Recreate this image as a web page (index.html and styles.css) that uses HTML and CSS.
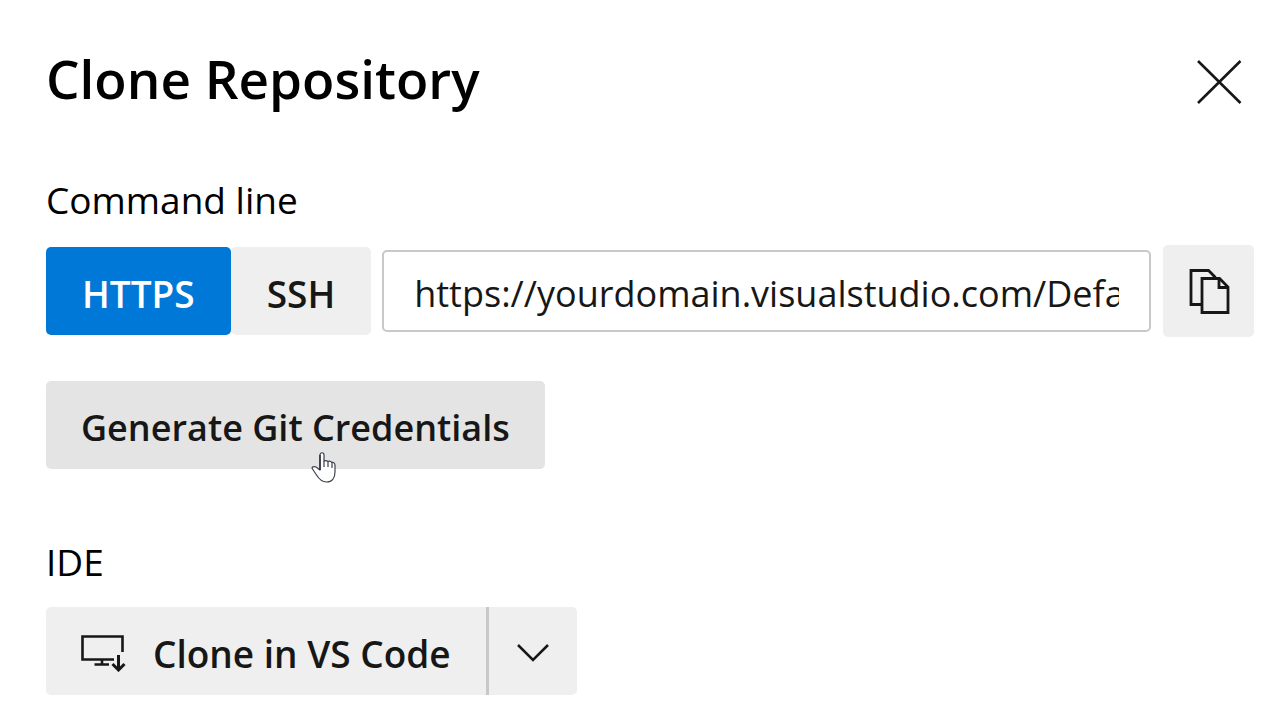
FILE: index.html
```
<!DOCTYPE html>
<html lang="en">
<head>
    <meta charset="UTF-8">
    <meta name="viewport" content="width=device-width, initial-scale=1.0">
    <title>Clone Repository</title>
    <link rel="stylesheet" href="styles.css">
</head>
<body>
    <main class="panel">
        <header class="panel-header">
            <h1>Clone Repository</h1>
            <button class="close-btn" type="button" aria-label="Close">
                <svg width="46" height="46" viewBox="0 0 46 46" fill="none" stroke="currentColor" stroke-width="2.6">
                    <path d="M2 2L44.500 44M44.500 2L2 44"/>
                </svg>
            </button>
        </header>

        <section class="section">
            <label class="section-label" for="clone-url">Command line</label>
            <div class="url-row">
                <div class="protocols">
                    <button class="btn btn-primary" type="button">HTTPS</button>
                    <button class="btn" type="button">SSH</button>
                </div>
                <input class="url-input" id="clone-url" type="text" readonly value="https://yourdomain.visualstudio.com/DefaultCollection/_git/Project">
                <button class="copy-btn" type="button" aria-label="Copy clone URL">
                    <svg width="42" height="46" viewBox="0 0 42 46" fill="none" stroke="currentColor" stroke-width="2.8">
                        <path d="M13 36.500H3V2.500H20.500L27.500 9.500"/>
                        <path d="M14 10.500H31.500L40 19V44.500H14Z"/>
                        <path d="M31 10.500V19.500H40"/>
                    </svg>
                </button>
            </div>
            <div class="credentials">
                <button class="btn btn-hover" type="button">Generate Git Credentials</button>
                <svg class="cursor" width="26" height="34" viewBox="0 0 26 34" fill="#fff" stroke="#3c404c" stroke-width="1.2" stroke-linejoin="round">
                    <path d="M9 19V4C9 1 13 1 13 4V10Q15 9 17 10.500Q19 9.500 21 11.500Q23.500 11 24 14V21C24 27 21 31 15.500 31C11 31 8 28 5.500 24L1.500 18C0 16 3 15 5 16Z"/>
                    <path d="M13 10V16M17 10.500V16M21 11.500V17" fill="none"/>
                    <path d="M9 4V19" stroke="#16192b" fill="none"/>
                </svg>
            </div>
        </section>

        <section class="section">
            <h2 class="section-label">IDE</h2>
            <div class="split-btn">
                <button class="btn btn-ide" type="button">
                    <svg width="46" height="38" viewBox="0 0 46 38" fill="none" stroke="currentColor" stroke-width="2.6">
                        <path d="M33 25.500H1.500V2.500H41.500V18"/>
                        <path d="M21 25.500V30.500M13.500 30.500H28"/>
                        <path d="M37.500 21V36M31.500 30L37.500 36L43.500 30" stroke-width="3"/>
                    </svg>
                    Clone in VS Code
                </button>
                <button class="btn btn-menu" type="button" aria-label="More IDEs">
                    <svg width="34" height="20" viewBox="0 0 34 20" fill="none" stroke="currentColor" stroke-width="2.5">
                        <path d="M2 2L17 17L32 2"/>
                    </svg>
                </button>
            </div>
        </section>
    </main>
</body>
</html>
```
FILE: styles.css
```
:root {
    --primary: #0078d7;
    --text: #171717;
    --surface: #efefef;
    --surface-hover: #e4e4e4;
    --border: #c8c8c8;
}

* {
    margin: 0;
    padding: 0;
    box-sizing: border-box;
}

body {
    font-family: 'Open Sans', 'Noto Sans', sans-serif;
    font-size: 37px;
    background: #fff;
    color: #000;
}

svg {
    display: block;
    flex-shrink: 0;
}

button,
input {
    font: inherit;
    color: var(--text);
}

button {
    border: none;
    cursor: pointer;
}

.panel {
    padding: 41px 30px 24px 46px;
}

/* Header */
.panel-header {
    display: flex;
    align-items: flex-start;
    justify-content: space-between;
    margin-bottom: 58px;
}

h1 {
    font-size: 53px;
    font-weight: 600;
    line-height: 76px;
}

.close-btn {
    padding: 18px 12px 0;
    background: none;
}

/* Sections */
.section {
    margin-bottom: 68px;
}

.section:last-child {
    margin-bottom: 0;
}

.section-label {
    display: block;
    font-size: 37px;
    font-weight: 400;
    line-height: 50px;
    margin-bottom: 20px;
}

.btn {
    display: flex;
    align-items: center;
    justify-content: center;
    height: 88px;
    padding: 4px 35px 0;
    background: var(--surface);
    border-radius: 5px;
    font-weight: 600;
    white-space: nowrap;
}

.protocols .btn {
    padding: 4px 36px 0;
}

.btn-primary {
    background: var(--primary);
    color: #fff;
}

.btn-hover {
    background: var(--surface-hover);
    font-size: 36px;
}

.url-row {
    display: flex;
    align-items: center;
    margin-bottom: 44px;
}

.protocols {
    display: flex;
    margin-right: 11px;
}

.url-input {
    flex: 1;
    min-width: 0;
    height: 82px;
    padding: 4px 30px 0;
    border: 2px solid var(--border);
    border-radius: 5px;
    background: #fff;
    font-size: 36px;
    outline: none;
}

.copy-btn {
    display: flex;
    align-items: center;
    justify-content: center;
    width: 91px;
    height: 92px;
    margin-left: 12px;
    background: var(--surface);
    border-radius: 5px;
}

.credentials {
    position: relative;
    display: flex;
}

/* Pointer over the hovered button */
.cursor {
    position: absolute;
    left: 265px;
    top: 70px;
}

/* IDE button with its drop-down part */
.split-btn {
    display: flex;
}

.btn-ide {
    gap: 26px;
    border-radius: 5px 0 0 5px;
}

.btn-menu {
    padding: 4px 27px 0;
    border-left: 3px solid var(--border);
    border-radius: 0 5px 5px 0;
}
```
